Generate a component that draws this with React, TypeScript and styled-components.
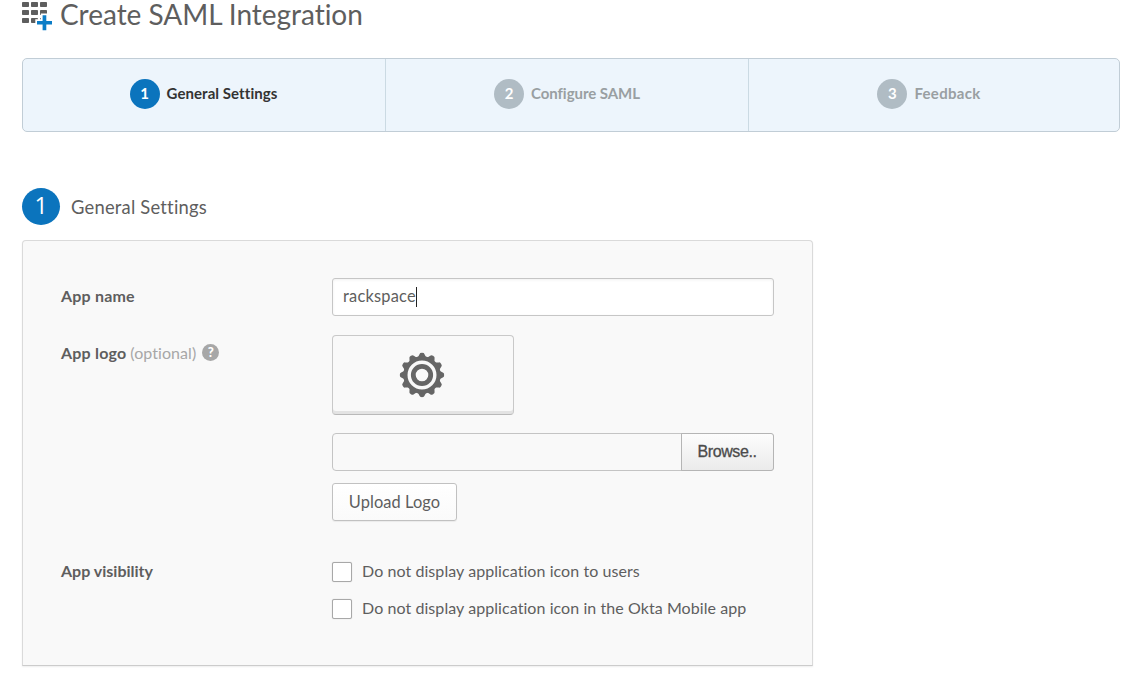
import React from 'react';
import styled, { createGlobalStyle } from 'styled-components';

const GlobalStyle = createGlobalStyle`
  *, *::before, *::after { box-sizing: border-box; }
  body {
    margin: 0;
    background: #fff;
    color: #5e5e5e;
    font-family: Lato, "Liberation Sans", sans-serif;
    font-size: 16px;
    font-variant-ligatures: none;
  }
`;

const Page = styled.main`
  height: 691px;
  padding: 0 24px 0 22px;
`;

const Header = styled.header`
  display: flex;
  height: 58px;
  gap: 8px;
`;

const Title = styled.h1`
  margin: 0;
  font-size: 28px;
  line-height: 29px;
  font-weight: 400;
  white-space: nowrap;
  letter-spacing: -0.03px;
`;

const Steps = styled.nav`
  display: grid;
  grid-template-columns: 363px 363px 1fr;
  height: 74px;
  background: #edf5fc;
  border: 1px solid #c1cdd6;
  border-radius: 5px;
`;

const Step = styled.div<{ $shift: number }>`
  display: flex;
  align-items: center;
  justify-content: center;
  gap: 7px;
  padding-right: ${(p) => p.$shift}px;
  padding-bottom: 2px;
  font-size: 15px;
  font-weight: 700;
  &:not(:last-child) { border-right: 1px solid #cbdae3; }
`;

const StepNumber = styled.span<{ $active: boolean }>`
  width: 30px;
  height: 30px;
  border-radius: 50%;
  background: ${(p) => (p.$active ? '#0b74bd' : '#b0bcc4')};
  color: #fff;
  line-height: 28px;
  text-align: center;
`;

const StepLabel = styled.span<{ $active: boolean; $spacing: number }>`
  margin-bottom: 3px;
  color: ${(p) => (p.$active ? '#333' : '#999fa2')};
  line-height: 20px;
  letter-spacing: ${(p) => p.$spacing}px;
  white-space: nowrap;
`;

const SectionHead = styled.div`
  display: flex;
  align-items: center;
  gap: 11px;
  height: 38px;
  margin: 56px 0 14px;
`;

const SectionNumber = styled.span`
  width: 38px;
  height: 37px;
  margin-bottom: 1px;
  border-radius: 50%;
  background: #0b74bd;
  color: #fff;
  font: 400 23px/35px "Open Sans", sans-serif;
  text-align: center;
`;

const SectionTitle = styled.h2`
  margin: 0;
  font-size: 18.4px;
  line-height: 24px;
  font-weight: 400;
  white-space: nowrap;
  letter-spacing: 0.2px;
`;

const Panel = styled.form`
  width: 791px;
  height: 426px;
  padding: 37px 38px 0 38px;
  background: #f9f9f9;
  border: 1px solid #dadada;
  border-bottom-color: #ccc;
  border-radius: 4px 4px 0 0;
  box-shadow: 0 1px 2px rgba(0, 0, 0, 0.07);
`;

const Row = styled.div<{ $gap: number }>`
  display: grid;
  grid-template-columns: 271px 442px;
  margin-bottom: ${(p) => p.$gap}px;
`;

const Label = styled.div<{ $top?: number; $spacing?: number }>`
  display: flex;
  align-items: center;
  height: 22px;
  margin-top: ${(p) => p.$top ?? 6}px;
  font-size: 16px;
  font-weight: 700;
  letter-spacing: ${(p) => p.$spacing ?? 0}px;
  white-space: nowrap;
`;

const Optional = styled.span`
  margin: 0 6px 0 4px;
  color: #a7a7a7;
  font-weight: 400;
  letter-spacing: 0.06px;
`;

const Help = styled.span`
  width: 17px;
  height: 17px;
  margin-top: 1px;
  border-radius: 50%;
  background: #a7a7a7;
  color: #fff;
  font-size: 13px;
  font-weight: 900;
  line-height: 17px;
  text-align: center;
`;

const TextField = styled.div`
  display: flex;
  align-items: center;
  height: 38px;
  padding: 0 10px 1px;
  background: #fff;
  border: 1px solid #c6c6c6;
  border-radius: 3px;
  box-shadow: inset 0 1px 3px rgba(0, 0, 0, 0.06);
`;

const FieldValue = styled.span`
  margin-bottom: 2px;
  font-size: 16.4px;
  letter-spacing: 0.22px;
`;

const Caret = styled.span`
  width: 1px;
  height: 20px;
  background: #222;
`;

const Controls = styled.div`
  display: flex;
  flex-direction: column;
  align-items: flex-start;
`;

const LogoBox = styled.div`
  display: flex;
  justify-content: center;
  width: 182px;
  height: 80px;
  padding: 16px 2px 0 0;
  border: 1px solid #c9c9c9;
  border-bottom-color: #b9b9b9;
  border-radius: 4px;
  box-shadow: inset 0 -3px 0 #e3e3e3;
`;

const FileRow = styled.div`
  display: flex;
  width: 442px;
  height: 38px;
  margin: 18px 0 12px;
  border: 1px solid #c4c4c4;
  border-radius: 4px;
`;

const Browse = styled.button`
  width: 93px;
  height: 38px;
  margin: -1px -1px 0 auto;
  padding: 0 1px 1px 0;
  border: 1px solid #b5b5b5;
  border-radius: 0 3px 3px 0;
  background: linear-gradient(#fdfdfd, #ebebeb);
  color: #4b4b4b;
  font: 400 16px "Liberation Sans", sans-serif;
  -webkit-text-stroke: 0.3px #4b4b4b;
  letter-spacing: -0.4px;
`;

const Upload = styled.button`
  width: 125px;
  height: 38px;
  padding: 0 0 2px;
  border: 1px solid #c1c1c1;
  border-radius: 3px;
  background: linear-gradient(#fff, #fafafa);
  box-shadow: 0 1px 1px rgba(0, 0, 0, 0.06);
  color: #5e5e5e;
  font: inherit;
  font-size: 16.4px;
  letter-spacing: 0.1px;
`;

const Option = styled.label`
  display: flex;
  align-items: center;
  height: 20px;
  gap: 10px;
  margin-bottom: 17px;
  line-height: 20px;
  white-space: nowrap;
  letter-spacing: 0.07px;
`;

const Box = styled.span`
  width: 20px;
  height: 20px;
  background: #fff;
  border: 1px solid #a8a8a8;
  border-radius: 2px;
  box-shadow: 0 0 1px rgba(0, 0, 0, 0.25);
`;

const OptionText = styled.span`
  margin-top: -3px;
`;

const AppsIcon = () => (
  <svg width="30" height="31" viewBox="0 0 30 31">
    <g fill="#5e5e5e">
      {[2, 10, 18].map((y) =>
        [0, 9, 18].map((x) => (
          <rect key={`${x}-${y}`} x={x} y={y} width="7" height="5" rx="0.8" />
        )),
      )}
    </g>
    <path
      d="M20.600 15.200h3.700v5.800H30v3.400h-5.700v5.800h-3.700v-5.800H15V21h5.600z"
      fill="#0b7dc7"
      stroke="#fff"
      strokeWidth="3.400"
      paintOrder="stroke"
    />
  </svg>
);

const GearIcon = () => (
  <svg width="46" height="46" viewBox="-23 -23 46 46">
    <g fill="#666">
      {Array.from({ length: 12 }, (_, i) => (
        <path key={i} d="M-4.500-17L-2.500-20.800Q-2.300-22.200 0-22.200Q2.300-22.200 2.500-20.800L4.500-17z" transform={`rotate(${i * 30})`} />
      ))}
    </g>
    <circle r="16.600" fill="#f9f9f9" stroke="#666" strokeWidth="4.200" />
    <circle r="8.700" fill="none" stroke="#666" strokeWidth="4.800" />
  </svg>
);

const steps = [
  { label: 'General Settings', active: true, spacing: 0.07, shift: 1 },
  { label: 'Configure SAML', active: false, spacing: -0.05, shift: 0 },
  { label: 'Feedback', active: false, spacing: 0.3, shift: 10 },
];

export default function App() {
  return (
    <Page>
      <GlobalStyle />
      <Header>
        <AppsIcon />
        <Title>Create SAML Integration</Title>
      </Header>
      <Steps>
        {steps.map((s, i) => (
          <Step key={s.label} $shift={s.shift}>
            <StepNumber $active={s.active}>{i + 1}</StepNumber>
            <StepLabel $active={s.active} $spacing={s.spacing}>{s.label}</StepLabel>
          </Step>
        ))}
      </Steps>
      <SectionHead>
        <SectionNumber>1</SectionNumber>
        <SectionTitle>General Settings</SectionTitle>
      </SectionHead>
      <Panel>
        <Row $gap={19}>
          <Label $spacing={0.2}>App name</Label>
          <TextField>
            <FieldValue>rackspace</FieldValue>
            <Caret />
          </TextField>
        </Row>
        <Row $gap={41}>
          <Label $spacing={0.2}>
            App logo<Optional>(optional)</Optional>
            <Help>?</Help>
          </Label>
          <Controls>
            <LogoBox>
              <GearIcon />
            </LogoBox>
            <FileRow>
              <Browse type="button">Browse..</Browse>
            </FileRow>
            <Upload type="button">Upload Logo</Upload>
          </Controls>
        </Row>
        <Row $gap={0}>
          <Label $top={-3}>App visibility</Label>
          <Controls>
            <Option>
              <Box />
              <OptionText>Do not display application icon to users</OptionText>
            </Option>
            <Option>
              <Box />
              <OptionText>Do not display application icon in the Okta Mobile app</OptionText>
            </Option>
          </Controls>
        </Row>
      </Panel>
    </Page>
  );
}
